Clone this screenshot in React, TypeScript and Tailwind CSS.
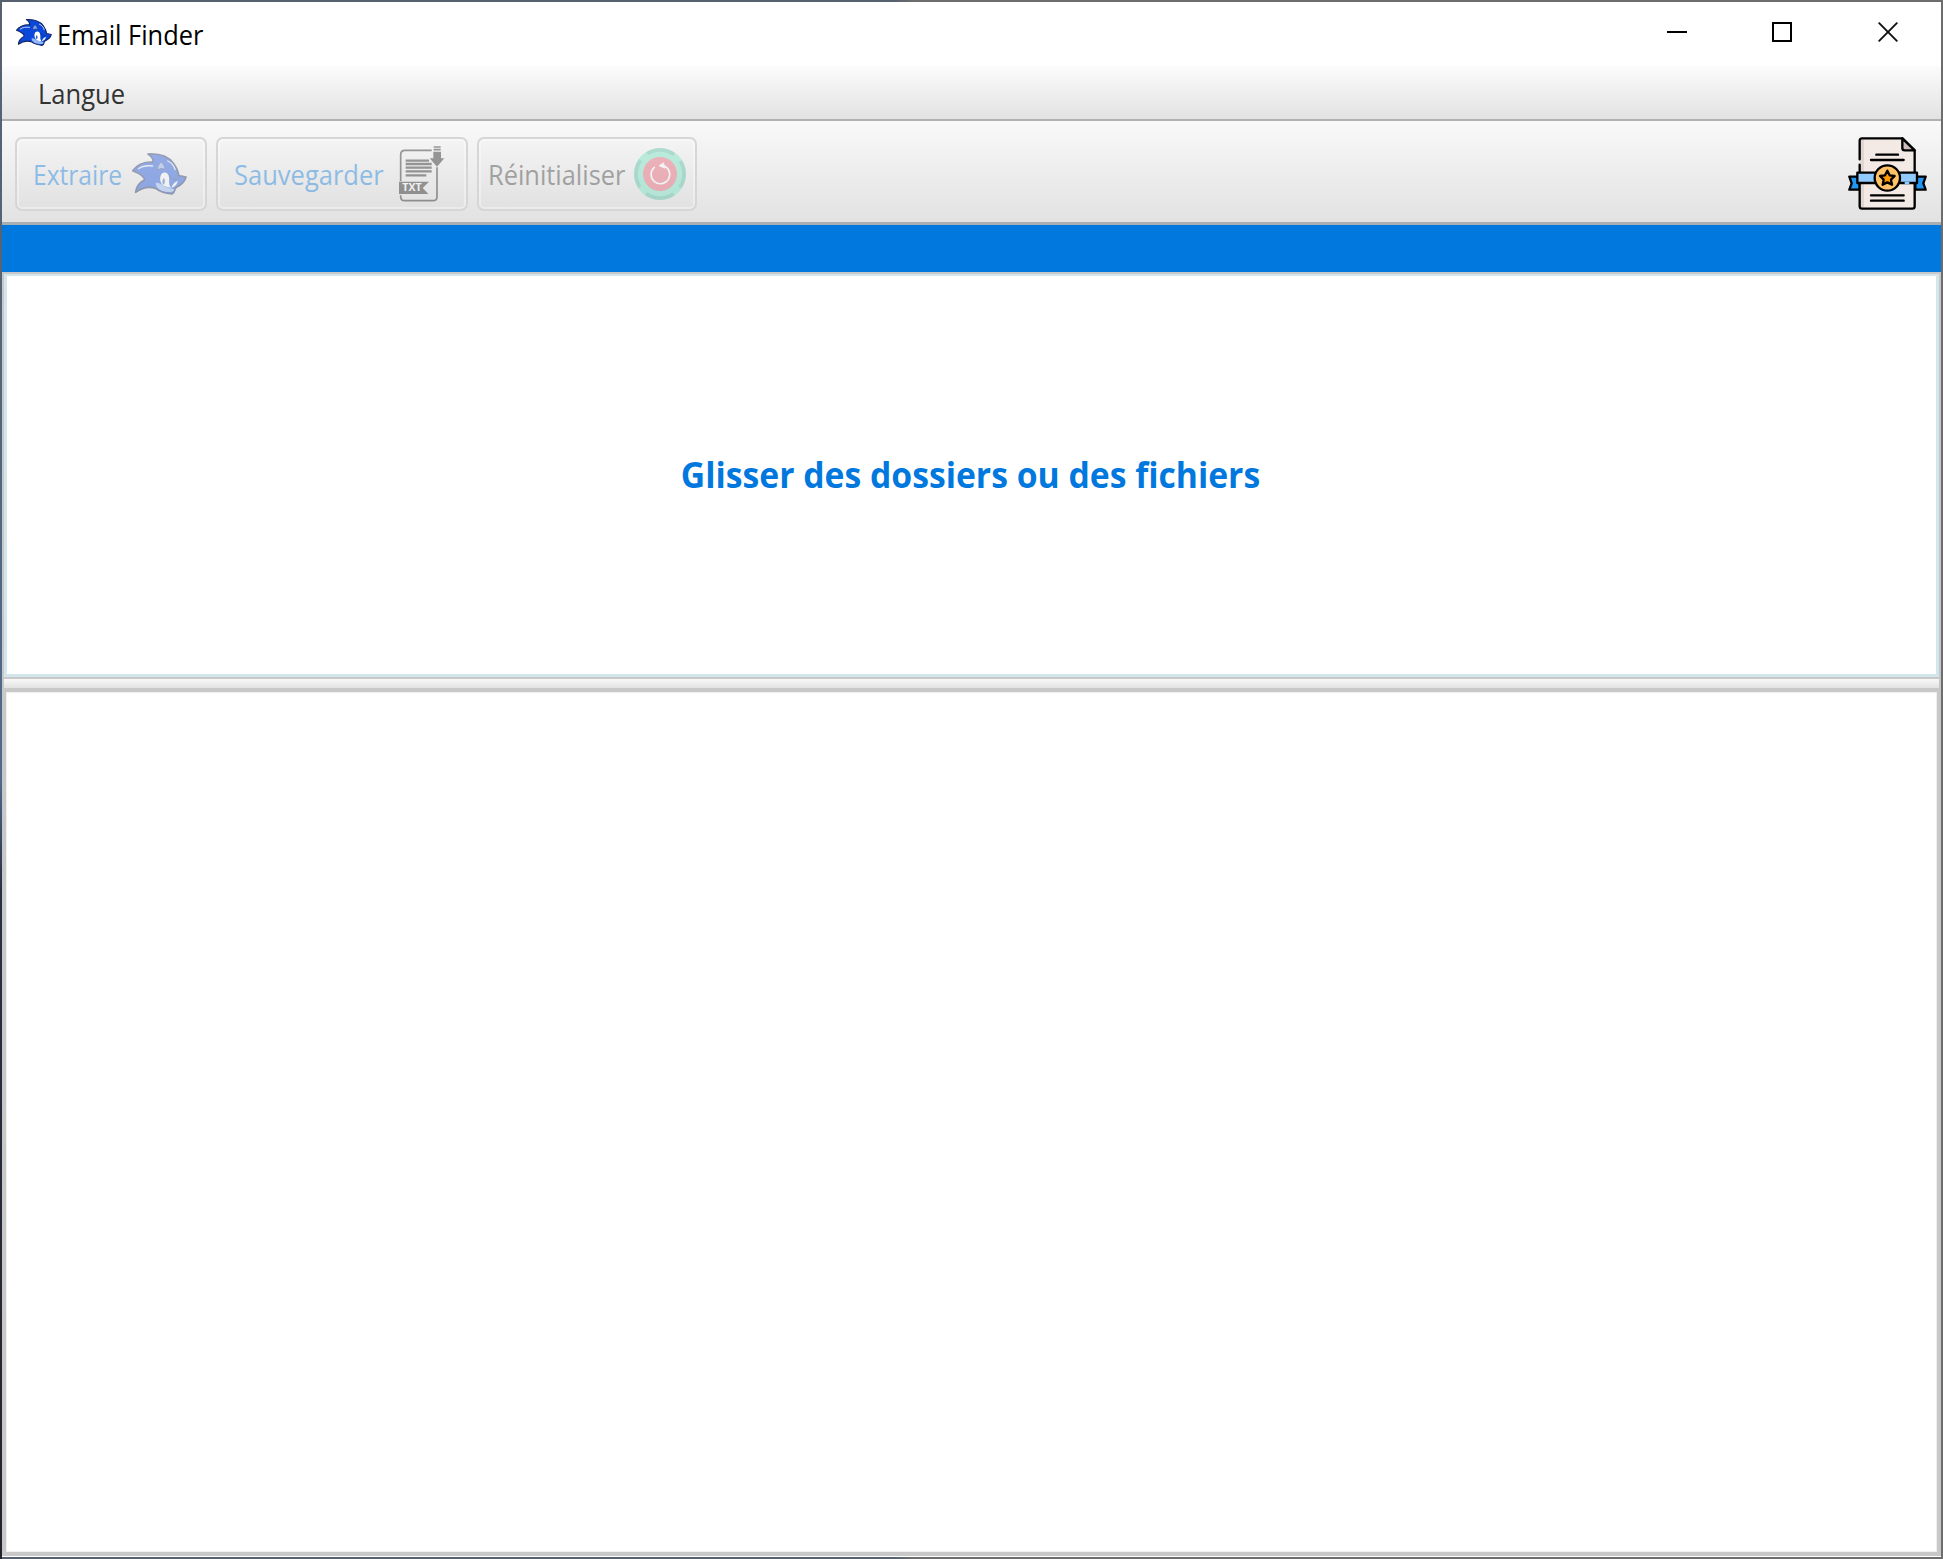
import type { ReactNode } from "react";
import clsx from "clsx";

const SonicIcon = ({ className }: { className?: string }) => (
  <svg viewBox="0 0 166 126" preserveAspectRatio="none" className={className} fill="none">
    <path
      d="M48 3C84 1 112 12 126 32C135 45 140 56 141 68L163 72C160 84 152 94 134 103C126 108 132 119 121 123C108 121 88 120 73 107C50 99 30 104 11 118C12 102 22 89 38 80C36 68 20 60 2 53C16 33 38 26 64 27C64 18 58 9 48 3Z"
      fill="#0a48dc"
      stroke="#14245e"
      strokeWidth="5"
      strokeLinejoin="round"
    />
    <path d="M72 90C82 87 90 96 102 102C114 107 128 105 127 112C124 119 112 117 102 116C84 114 71 104 72 90Z" fill="#93b8f8" />
    <path d="M85 74C86 62 94 57 102 59C113 62 113 78 112 88C112 96 115 101 118 104C106 104 96 99 90 93C87 88 84 82 85 74Z" fill="#fff" />
    <path d="M92 91C91 82 93 77 97 76C100 80 100 88 97 95Z" fill="#3158b8" />
    <path d="M138 83C129 87 122 93 119 104C130 101 137 93 138 83Z" fill="#fff" />
    <path d="M114 66C116 78 124 82 138 76" stroke="#14245e" strokeWidth="2.5" />
    <path d="M88 27C80 33 77 42 76 51C86 45 93 45 101 50C99 40 94 33 88 27Z" fill="#7ea4ee" stroke="#14245e" strokeWidth="2" />
    <path d="M20 47C32 38 46 37 62 39" stroke="#dce8ff" strokeWidth="4" strokeLinecap="round" />
    <path d="M108 24C120 29 127 38 130 50" stroke="#dce8ff" strokeWidth="4" strokeLinecap="round" />
  </svg>
);

const TxtFileIcon = () => (
  <svg viewBox="0 0 138 168" className="h-[56px] w-[46px]" fill="none">
    <path
      d="M98 13H18C10 13 5 18 5 26V106M5 148V152C5 160 10 164 18 164H101C109 164 114 159 114 152V64"
      stroke="#101010"
      strokeWidth="5"
    />
    <path d="M20 44H90M20 54H98M20 65H98M20 76H98M20 88H82" stroke="#101010" strokeWidth="7" />
    <path d="M104 3H125M104 11H125" stroke="#101010" strokeWidth="5" />
    <path d="M103 17H126V37H136L114 62L92 37H103Z" fill="#101010" />
    <path d="M0 107H90L71 126L88 144H0Z" fill="#101010" />
    <text x="10" y="136" fontFamily="Open Sans, sans-serif" fontSize="29" fontWeight="700" fill="#fff" textLength="58" lengthAdjust="spacingAndGlyphs">
      TXT
    </text>
  </svg>
);

const ResetIcon = () => (
  <svg viewBox="0 0 156 156" className="h-[52px] w-[52px]" fill="none">
    <circle cx="78" cy="78" r="78" fill="#6be3bd" />
    <circle cx="78" cy="78" r="72" stroke="#4abb9e" strokeWidth="11" strokeDasharray="86 27.1" strokeDashoffset="43" />
    <circle cx="78" cy="78" r="51" fill="#e85468" />
    <path d="M61 58A28 28 0 1 0 89 53" stroke="#fff" strokeWidth="5" strokeLinecap="round" />
    <path d="M75 53L89 44L92 61Z" fill="#fff" stroke="#fff" strokeWidth="2" />
  </svg>
);

const CertificateIcon = () => (
  <svg viewBox="0 0 237 219" className="h-[73px] w-[79px]" stroke="#000" strokeWidth="7" strokeLinejoin="round" strokeLinecap="round" fill="none">
    <path d="M4 119H35V158H4L11 139Z" fill="#2196f3" />
    <path d="M233 119H202V158H233L226 139Z" fill="#2196f3" />
    <path d="M42 4H163L200 40V208Q200 215 193 215H42Q35 215 35 208V11Q35 4 42 4Z" fill="#f3eae6" stroke="none" />
    <path d="M38 7H48V212H38Z" fill="#e2d6d3" stroke="none" />
    <path d="M35 67V11Q35 4 42 4H163L200 40V208Q200 215 193 215H42Q35 215 35 208V83" />
    <path d="M163 4V33Q163 40 170 40H200Z" fill="#cdbfbc" />
    <path d="M85 53H150M69 69H167M69 175H167M69 191H167" />
    <path d="M28 107H207V138H28Z" fill="#90caff" />
    <path d="M173 138H181" stroke="#90caff" />
    <circle cx="118" cy="123" r="38" fill="#ffc266" />
    <path d="M118 101L125 115L140 117L129 128L132 143L118 136L104 143L107 128L96 117L111 115Z" fill="#ff9800" />
  </svg>
);

type ToolButtonProps = {
  className: string;
  children: ReactNode;
};

const ToolButton = ({ className, children }: ToolButtonProps) => (
  <button
    disabled
    className={clsx(
      "flex h-[74px] shrink-0 items-center rounded-[7px] border-2 border-[#d6d6d6] bg-gradient-to-b from-[#f4f4f4] to-[#e1e1e1] shadow-[inset_0_0_0_2px_rgba(255,255,255,0.35)]",
      className
    )}
  >
    {children}
  </button>
);

const TitleBar = () => (
  <header className="flex h-16 shrink-0 items-start bg-white">
    <SonicIcon className="mt-[17px] ml-[14px] h-[27px] w-[36px]" />
    <h1 className="mt-[15px] ml-[5px] origin-left scale-x-[0.94] text-[27px] leading-[36px] text-black">Email Finder</h1>
    <div className="mr-px ml-auto flex h-[60px] items-center">
      <button className="flex w-[105px] justify-center">
        <span className="h-[2px] w-5 bg-black" />
      </button>
      <button className="flex w-[106px] justify-center">
        <span className="size-5 border-2 border-black" />
      </button>
      <button className="flex w-[105px] justify-center">
        <svg viewBox="0 0 20 20" className="size-5" stroke="#111" strokeWidth="1.9">
          <path d="M0.7 0.7L19.3 19.3M19.3 0.7L0.7 19.3" />
        </svg>
      </button>
    </div>
  </header>
);

export default function App() {
  return (
    <div className="h-[1559px] w-[1943px] bg-[linear-gradient(to_right,#56616f_0,#56616f_46%,#6d6d6d_47%,#6d6d6d_100%)] font-['Open_Sans',sans-serif]">
      <div className="flex h-full bg-[linear-gradient(to_bottom,transparent_0,transparent_2px,#56616f_2px,#4f6a8c_50%,#2b2f42_57%,#22232d_100%)] bg-[length:2px_100%] bg-no-repeat p-[2px]">
        <div className="flex min-w-0 flex-1 flex-col bg-white">
          <TitleBar />

          {/* Menu bar */}
          <nav className="flex h-[55px] shrink-0 items-start border-b-2 border-[#b1b1b1] bg-gradient-to-b from-[#fcfcfc] to-[#e2e2e2] pl-[36px]">
            <span className="mt-[10px] origin-left scale-x-[0.945] text-[27px] leading-[36px] text-[#333]">Langue</span>
          </nav>

          {/* Toolbar */}
          <div className="flex h-[104px] shrink-0 items-start gap-[9px] border-b-[3px] border-[#a8afb4] bg-gradient-to-b from-[#f9f9f9] to-[#e2e2e2] pt-4 pr-[14px] pl-[13px]">
            <ToolButton className="w-[192px] pl-4">
              <span className="w-[99px] origin-left scale-x-[0.91] pt-[2px] text-left text-[27px] text-[#0078de] opacity-40">Extraire</span>
              <SonicIcon className="h-[42px] w-[55px] opacity-40" />
            </ToolButton>
            <ToolButton className="w-[252px] pl-4">
              <span className="w-[165px] origin-left scale-x-[0.945] pt-[2px] text-left text-[27px] text-[#0078de] opacity-40">Sauvegarder</span>
              <span className="opacity-40">
                <TxtFileIcon />
              </span>
            </ToolButton>
            <ToolButton className="w-[220px] pl-[9px]">
              <span className="w-[146px] origin-left scale-x-[0.94] pt-[2px] text-left text-[27px] text-[#333] opacity-40">Réinitialiser</span>
              <span className="opacity-40">
                <ResetIcon />
              </span>
            </ToolButton>
            <button className="ml-auto">
              <CertificateIcon />
            </button>
          </div>

          {/* Progress strip */}
          <div className="h-[47px] shrink-0 bg-[#0078de]" />

          {/* Drop zone */}
          <div className="h-[407px] shrink-0 border-2 border-[#c8c8c8]">
            <div className="flex h-full items-center justify-center border-x-[3px] border-t-2 border-b-[3px] border-[#d3e6ec] bg-white">
              <p className="mr-[2px] scale-x-[0.936] text-[36px] leading-none font-bold text-[#0078de]">Glisser des dossiers ou des fichiers</p>
            </div>
          </div>

          {/* Split divider */}
          <div className="h-[9px] shrink-0 border-x-2 border-[#c8c8c8] bg-gradient-to-b from-[#f8f8f8] to-[#e2e2e2]" />

          {/* Results */}
          <div className="mb-px flex-1 border-4 border-[#c8c8c8] bg-white shadow-[inset_0_0_0_1px_#efefef]" />
        </div>
      </div>
    </div>
  );
}
